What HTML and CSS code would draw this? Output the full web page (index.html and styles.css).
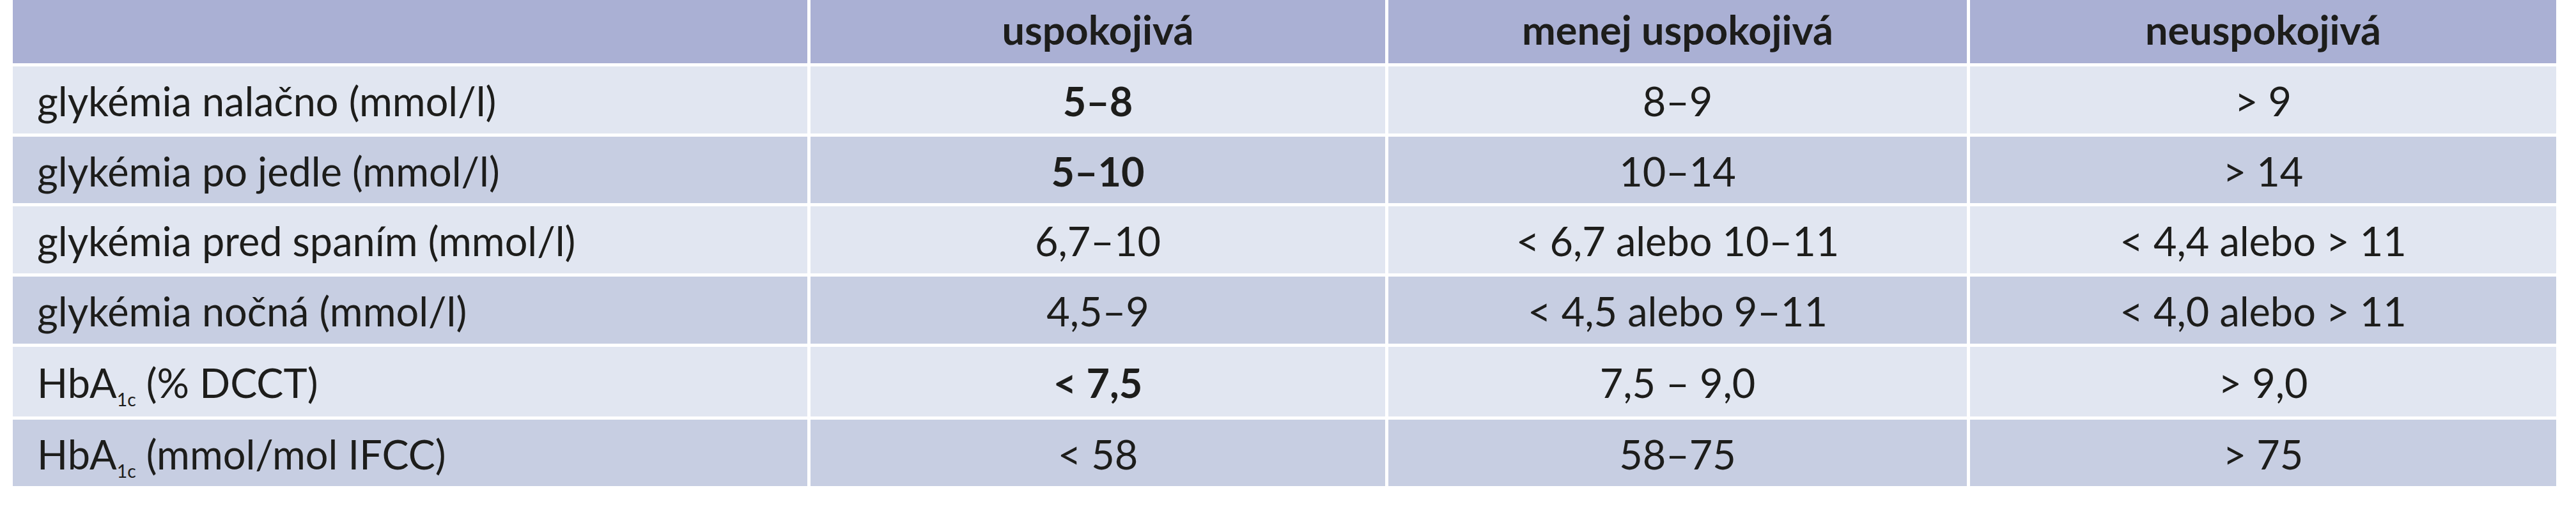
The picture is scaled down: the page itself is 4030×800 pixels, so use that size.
FILE: index.html
```html
<!DOCTYPE html>
<html lang="sk">
<head>
<meta charset="utf-8">
<title>Kompenzácia diabetu</title>
<link rel="stylesheet" href="styles.css">
</head>
<body>
<div class="table">
  <div class="cell head"></div>
  <div class="cell head center"><span>uspokojivá</span></div>
  <div class="cell head center"><span>menej uspokojivá</span></div>
  <div class="cell head center"><span>neuspokojivá</span></div>

  <div class="cell light label"><span>glykémia nalačno (mmol/l)</span></div>
  <div class="cell light center strong"><span>5–8</span></div>
  <div class="cell light center"><span>8–9</span></div>
  <div class="cell light center"><span>&gt; 9</span></div>

  <div class="cell dark label"><span>glykémia po jedle (mmol/l)</span></div>
  <div class="cell dark center strong"><span>5–10</span></div>
  <div class="cell dark center"><span>10–14</span></div>
  <div class="cell dark center"><span>&gt; 14</span></div>

  <div class="cell light label"><span>glykémia pred spaním (mmol/l)</span></div>
  <div class="cell light center"><span>6,7–10</span></div>
  <div class="cell light center"><span>&lt; 6,7 alebo 10–11</span></div>
  <div class="cell light center"><span>&lt; 4,4 alebo &gt; 11</span></div>

  <div class="cell dark label"><span>glykémia nočná (mmol/l)</span></div>
  <div class="cell dark center"><span>4,5–9</span></div>
  <div class="cell dark center"><span>&lt; 4,5 alebo 9–11</span></div>
  <div class="cell dark center"><span>&lt; 4,0 alebo &gt; 11</span></div>

  <div class="cell light label"><span>HbA<sub class="sub">1c</sub> (% DCCT)</span></div>
  <div class="cell light center strong"><span>&lt; 7,5</span></div>
  <div class="cell light center"><span>7,5 – 9,0</span></div>
  <div class="cell light center"><span>&gt; 9,0</span></div>

  <div class="cell dark label"><span>HbA<sub class="sub">1c</sub> (mmol/mol IFCC)</span></div>
  <div class="cell dark center"><span>&lt; 58</span></div>
  <div class="cell dark center"><span>58–75</span></div>
  <div class="cell dark center"><span>&gt; 75</span></div>
</div>
</body>
</html>
```
FILE: styles.css
```css
html, body {
  margin: 0;
  padding: 0;
  background: #ffffff;
}

body {
  padding-left: 20px;
  font-family: Lato, "Open Sans", "Liberation Sans", sans-serif;
  color: #1d1d1b;
}

.table {
  display: grid;
  grid-template-columns: 1243px 899px 905px 917px;
  grid-template-rows: 99px 105px 104px 105px 105px 109px 104px;
  gap: 5px;
  width: max-content;
}

.cell {
  display: flex;
  align-items: center;
  font-size: 63px;
  line-height: 1;
  white-space: nowrap;
  padding-top: 2px;
  box-sizing: border-box;
}

.head {
  background: #aab0d4;
  font-weight: 700;
  padding-top: 0;
  padding-bottom: 8px;
}

.light {
  background: #e1e6f1;
}

.dark {
  background: #c7cee2;
}

.label {
  padding-left: 38px;
}

.center {
  justify-content: center;
}

.strong {
  font-weight: 700;
}

.sub {
  font-size: 0.45em;
  vertical-align: -0.45em;
  line-height: 0;
}
```
